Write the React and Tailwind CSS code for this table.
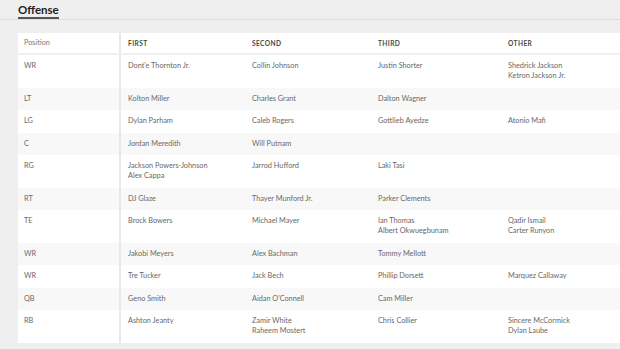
import React from "react";

const rows = [
  ["WR", ["Dont'e Thornton Jr."], ["Collin Johnson"], ["Justin Shorter"], ["Shedrick Jackson", "Ketron Jackson Jr."]],
  ["LT", ["Kolton Miller"], ["Charles Grant"], ["Dalton Wagner"], []],
  ["LG", ["Dylan Parham"], ["Caleb Rogers"], ["Gottlieb Ayedze"], ["Atonio Mafi"]],
  ["C", ["Jordan Meredith"], ["Will Putnam"], [], []],
  ["RG", ["Jackson Powers-Johnson", "Alex Cappa"], ["Jarrod Hufford"], ["Laki Tasi"], []],
  ["RT", ["DJ Glaze"], ["Thayer Munford Jr."], ["Parker Clements"], []],
  ["TE", ["Brock Bowers"], ["Michael Mayer"], ["Ian Thomas", "Albert Okwuegbunam"], ["Qadir Ismail", "Carter Runyon"]],
  ["WR", ["Jakobi Meyers"], ["Alex Bachman"], ["Tommy Mellott"], []],
  ["WR", ["Tre Tucker"], ["Jack Bech"], ["Phillip Dorsett"], ["Marquez Callaway"]],
  ["QB", ["Geno Smith"], ["Aidan O'Connell"], ["Cam Miller"], []],
  ["RB", ["Ashton Jeanty"], ["Zamir White", "Raheem Mostert"], ["Chris Collier"], ["Sincere McCormick", "Dylan Laube"]],
];

const grid = "grid grid-cols-[101px_2px_124px_126px_130px_1fr]";

function Cell({ names, className = "" }) {
  return (
    <div className={"pt-[6px] pb-[6.5px] leading-[10px] " + className}>
      {names.map((n, i) => (
        <div key={i}>{n}</div>
      ))}
    </div>
  );
}

export default function App() {
  return (
    <div
      className="w-[620px] h-[349px] overflow-hidden bg-[#efefef] text-[#686868] leading-none"
      style={{ fontFamily: "Lato, 'Open Sans', sans-serif" }}
    >
      <div className="flex pt-[4px] border-b border-[#dcdcdc]">
        <div className="ml-[18px] border-b-2 border-[#555] pb-[2px] text-[11.5px] font-bold leading-[11px] text-[#222]">
          Offense
        </div>
      </div>
      <div className="ml-[18px] mt-[13px] w-[602px] bg-white text-[7.3px]">
        <div className={grid + " h-[22px] items-center border-b-2 border-[#f0f0f0]"}>
          <div className="pl-[6px] text-[#7a7a7a]">Position</div>
          <div className="self-stretch bg-[#e8e8e8]" />
          <div className="pl-[7px] font-bold tracking-[0.4px] text-[6.6px] text-[#474747]">FIRST</div>
          <div className="pl-[7px] font-bold tracking-[0.4px] text-[6.6px] text-[#474747]">SECOND</div>
          <div className="pl-[7px] font-bold tracking-[0.4px] text-[6.6px] text-[#474747]">THIRD</div>
          <div className="pl-[7px] font-bold tracking-[0.4px] text-[6.6px] text-[#474747]">OTHER</div>
        </div>
        {rows.map((r, i) => (
          <div key={i} className={grid + (i % 2 === 1 ? " bg-[#f8f8f8]" : " bg-white")}>
            <Cell names={[r[0]]} className="pl-[6px]" />
            <div className="bg-[#e8e8e8]" />
            <Cell names={r[1]} className="pl-[7px]" />
            <Cell names={r[2]} className="pl-[7px]" />
            <Cell names={r[3]} className="pl-[7px]" />
            <Cell names={r[4]} className="pl-[7px]" />
          </div>
        ))}
      </div>
    </div>
  );
}
